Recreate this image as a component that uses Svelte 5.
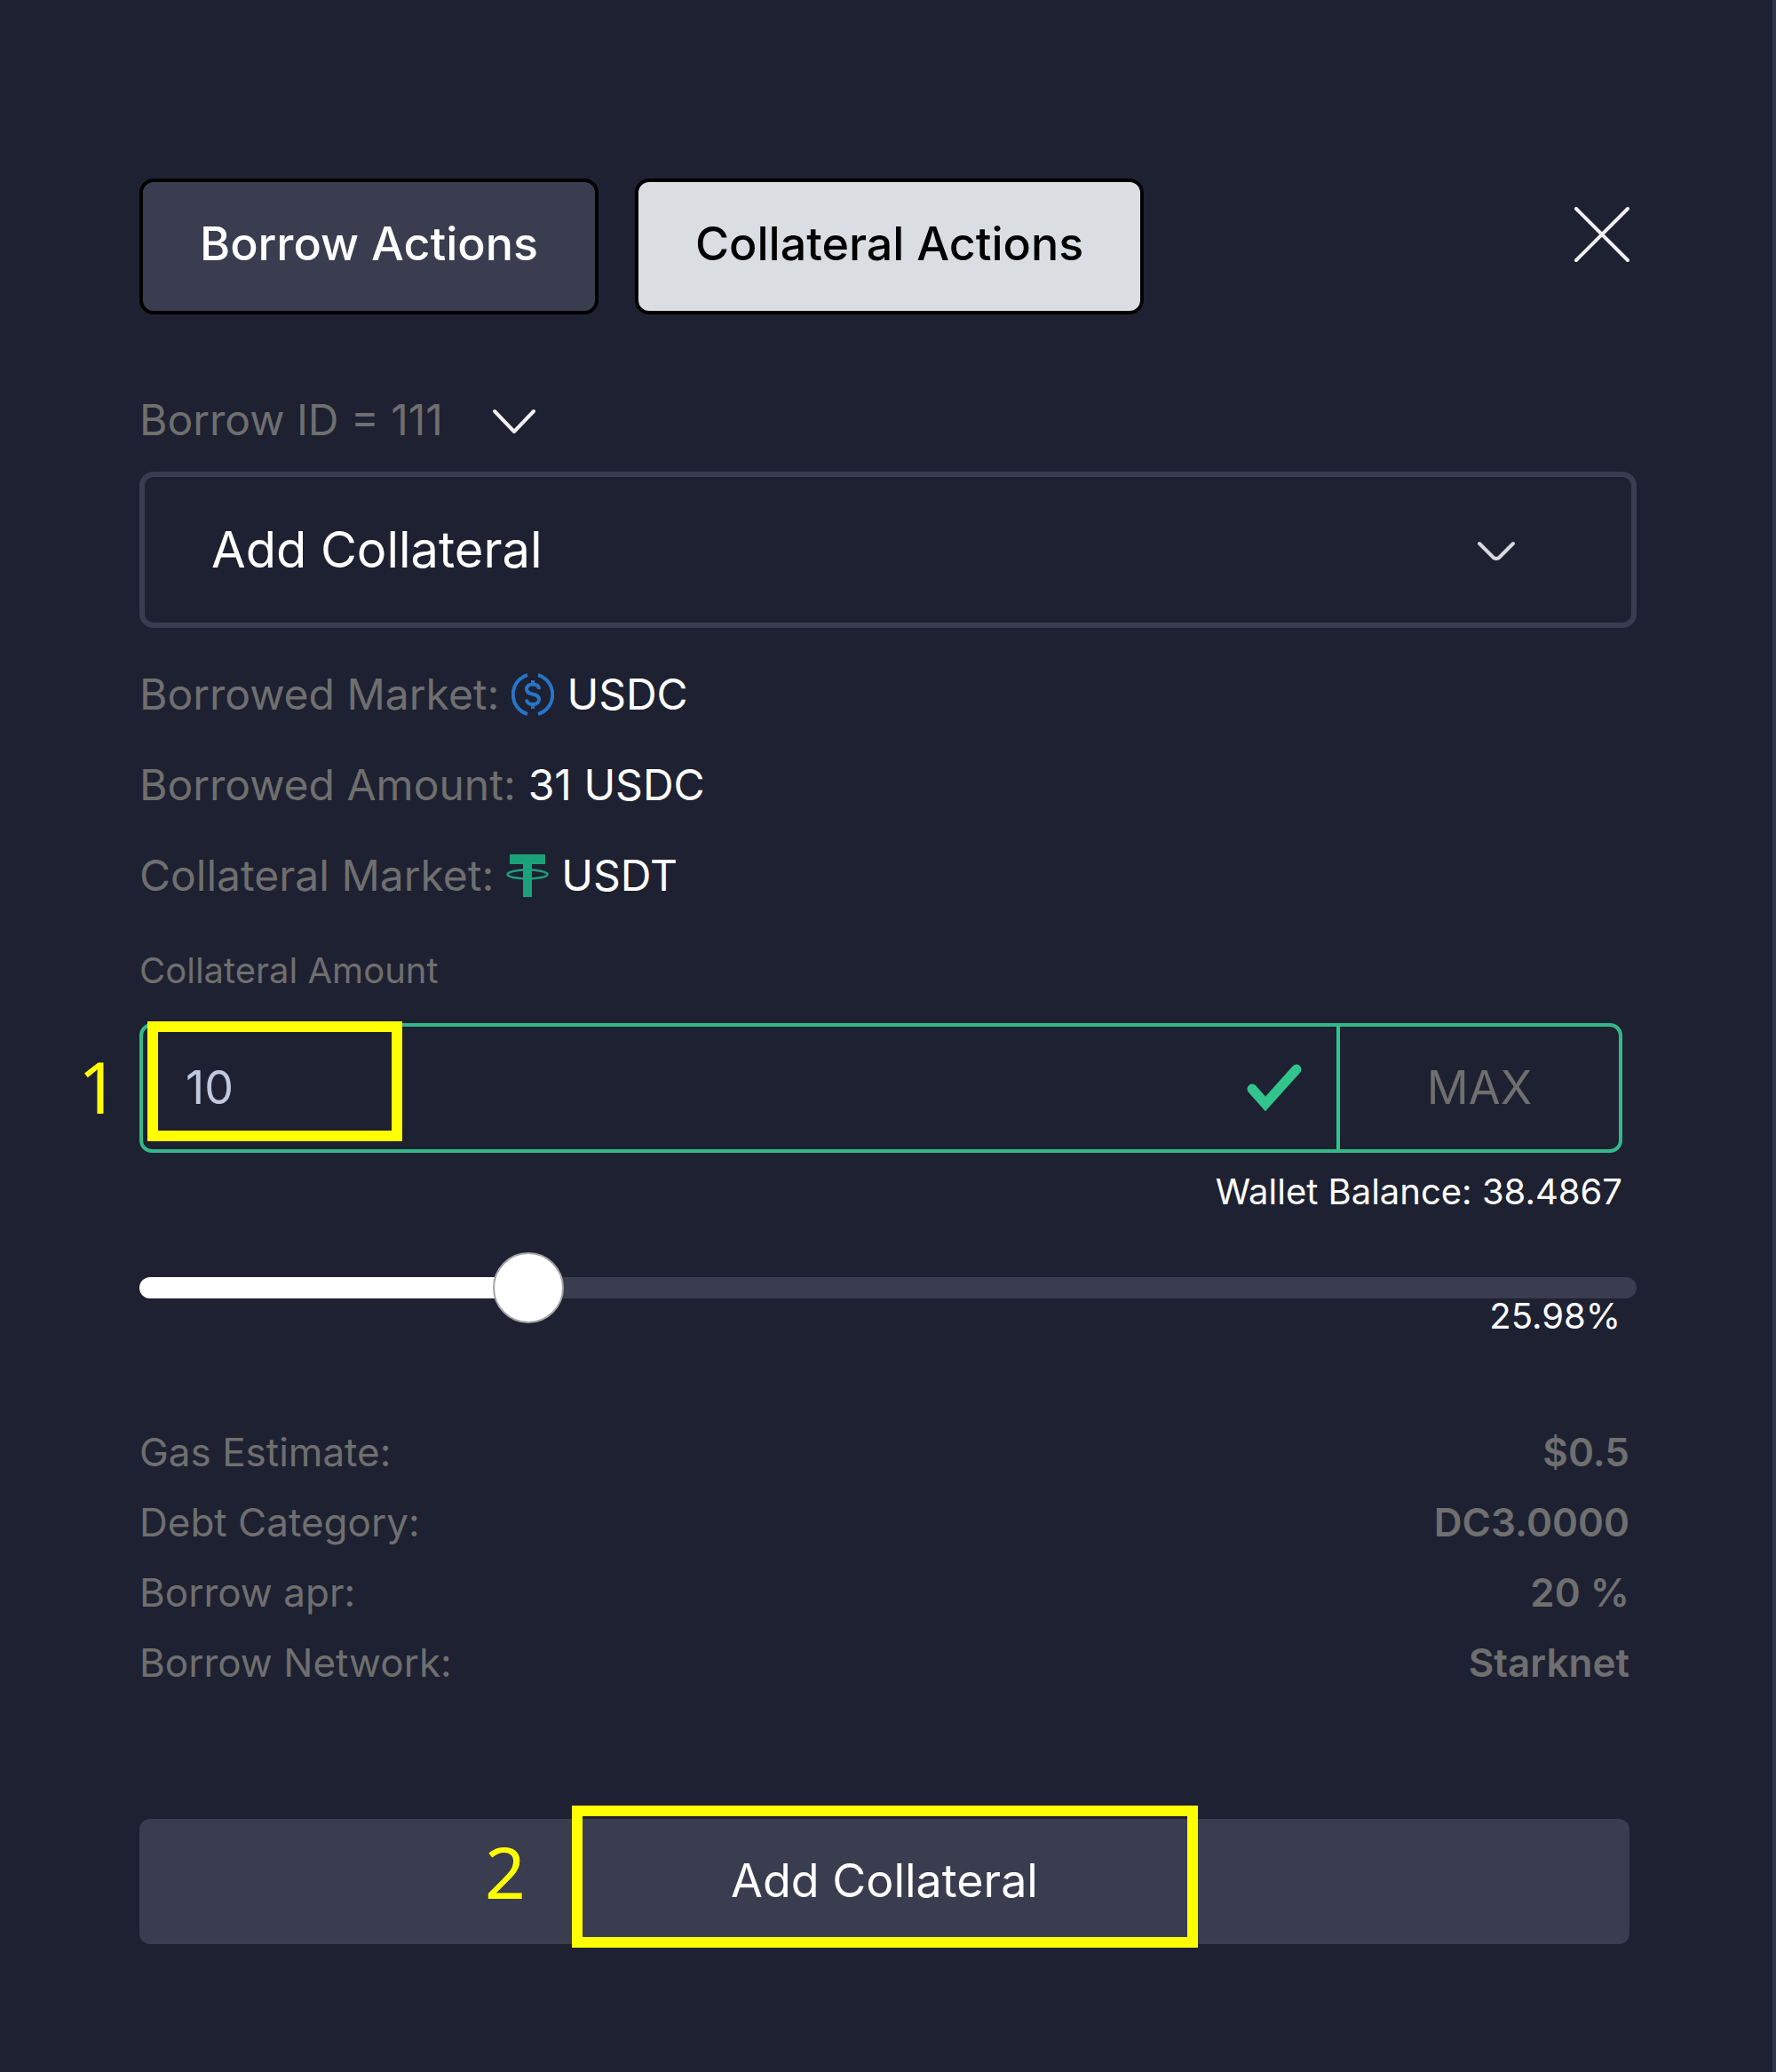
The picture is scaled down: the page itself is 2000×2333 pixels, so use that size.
<script>
  let action = $state('Add Collateral');
  let loan = $state('111');
  let amount = $state('10');
  let percent = $state(25.98);
  let tab = $state('collateral');

  const details = [
    ['Gas Estimate:', '$0.5'],
    ['Debt Category:', 'DC3.0000'],
    ['Borrow apr:', '20 %'],
    ['Borrow Network:', 'Starknet'],
  ];
</script>

<main class="panel">
  <header class="top">
    <nav class="tabs" aria-label="Actions">
      <button class="tab" class:active={tab === 'borrow'} onclick={() => (tab = 'borrow')}>Borrow Actions</button>
      <button class="tab" class:active={tab === 'collateral'} onclick={() => (tab = 'collateral')}>Collateral Actions</button>
    </nav>
    <button class="close" aria-label="Close">
      <svg width="62" height="62" viewBox="0 0 62 62" fill="none" stroke="#f0f0f2" stroke-width="4" stroke-linecap="round">
        <path d="M2 2 60 60M60 2 2 60" />
      </svg>
    </button>
  </header>

  <div class="loan">
    <select aria-label="Borrow ID" bind:value={loan}>
      <option value="111">Borrow ID = 111</option>
    </select>
    <svg width="50" height="34" viewBox="0 0 50 34" fill="none" stroke="#f0f0f2" stroke-width="4" stroke-linecap="round" stroke-linejoin="round">
      <path d="M3 7 25 30 47 7" />
    </svg>
  </div>

  <div class="action">
    <select aria-label="Action" bind:value={action}>
      <option>Add Collateral</option>
    </select>
    <svg width="44" height="28" viewBox="0 0 44 28" fill="none" stroke="#d8d9dd" stroke-width="4" stroke-linecap="round" stroke-linejoin="round">
      <path d="M3 7 19 23Q22 25 25 23L41 7" />
    </svg>
  </div>

  <div class="facts">
    <p>
      <span>Borrowed Market:</span>
      <svg width="48" height="48" viewBox="0 0 48 48" fill="none" stroke="#2775ca" stroke-width="4">
        <path d="M18 2A23 23 0 0 0 18 46M30 2A23 23 0 0 1 30 46" />
        <path d="M31 18C31 14 28 12.500 24 12.500S17 14.500 17 18C17 26 31 21 31 29.500C31 33 28 35 24 35S17 33 17 29.500M24 8V13M24 35V40" />
      </svg>
      <strong>USDC</strong>
    </p>
    <p><span>Borrowed Amount:</span><strong>31 USDC</strong></p>
    <p>
      <span>Collateral Market:</span>
      <svg width="48" height="48" viewBox="0 0 48 48">
        <path fill="#1ba27a" d="M4 0H44V11H29V48H19V11H4Z" />
        <ellipse cx="24" cy="22.500" rx="22.500" ry="5" fill="none" stroke="#1ba27a" stroke-width="2.500" />
      </svg>
      <strong>USDT</strong>
    </p>
  </div>

  <label class="caption" for="amount">Collateral Amount</label>
  <div class="narrow">
    <div class="field">
      <input id="amount" type="text" inputmode="decimal" bind:value={amount} />
      <svg class="check" width="62" height="54" viewBox="0 0 62 54" fill="none" stroke="#31c48d" stroke-width="11" stroke-linecap="round">
        <path d="M6 28 21 45 56 6" />
      </svg>
      <button class="max">MAX</button>
      <span class="step step-one">1</span>
      <span class="mark mark-one"></span>
    </div>
    <p class="balance">Wallet Balance: 38.4867</p>
  </div>

  <div class="slider">
    <div class="fill" style="width: {percent}%"></div>
    <input type="range" min="0" max="100" step="0.01" aria-label="Share of wallet balance" bind:value={percent} />
  </div>
  <p class="percent">{percent}%</p>

  <dl class="details">
    {#each details as [name, value]}
      <div><dt>{name}</dt><dd>{value}</dd></div>
    {/each}
  </dl>

  <div class="submit-row">
    <button class="submit">Add Collateral</button>
    <span class="step step-two">2</span>
    <span class="mark mark-two"></span>
  </div>
</main>

<style>
  :global(body) {
    background: #1e2131;
  }
  .panel {
    box-sizing: border-box;
    min-height: 100vh;
    padding: 201px 153px 144px 157px;
    border-right: 4px solid #2f364b;
    background: #1e2131;
    color: #fff;
    font-family: Inter, 'Liberation Sans', sans-serif;
    font-size: 48px;
    line-height: 60px;
  }
  button,
  select,
  input {
    margin: 0;
    padding: 0;
    border: 0;
    background: none;
    color: inherit;
    font: inherit;
    appearance: none;
    outline: none;
  }
  button,
  select {
    cursor: pointer;
  }
  p,
  dl,
  dd {
    margin: 0;
  }
  svg {
    flex: none;
    display: block;
  }

  .top {
    display: flex;
    justify-content: space-between;
    align-items: flex-start;
  }
  .tabs {
    display: flex;
    gap: 41px;
  }
  .tab {
    padding: 40px 64px 45px;
    border: 4px solid #000;
    border-radius: 16px;
    background: #3a3c4f;
    font-size: 52px;
    font-weight: 500;
  }
  .tab.active {
    background: #dadde2;
    color: #000;
  }
  .close {
    margin: 32px 8px 0 0;
  }

  .loan {
    display: inline-grid;
    align-items: center;
    margin-top: 89px;
    color: #6f6f6f;
  }
  .loan select,
  .loan svg,
  .action select,
  .action svg {
    grid-area: 1 / 1;
  }
  .loan select {
    padding-right: 105px;
  }
  .loan svg,
  .action svg {
    justify-self: end;
    pointer-events: none;
  }
  .action {
    display: grid;
    align-items: center;
    margin-top: 28px;
  }
  .action select {
    padding: 52px 75px;
    border: 6px solid #3a3c4f;
    border-radius: 16px;
    font-size: 56px;
  }
  .action svg {
    margin-right: 136px;
  }

  .facts {
    display: grid;
    gap: 42px;
    margin-top: 45px;
  }
  .facts p {
    display: flex;
    align-items: center;
    gap: 14px;
  }
  .facts span {
    color: #6f6f6f;
  }
  .facts strong {
    font-weight: 400;
  }

  .caption {
    display: block;
    margin: 51px 0 33px;
    color: #6f6f6f;
    font-size: 40px;
    line-height: 52px;
  }
  .narrow {
    margin-right: 16px;
  }
  .field {
    position: relative;
    display: flex;
    align-items: center;
    height: 138px;
    border: 4px solid #34b88a;
    border-radius: 14px;
    font-size: 52px;
  }
  .field input {
    flex: 1;
    min-width: 0;
    padding-left: 48px;
    color: #bfc8de;
  }
  .check {
    margin: 0 39px;
  }
  .max {
    align-self: stretch;
    width: 318px;
    border-left: 4px solid #31c48d;
    color: #6f6f6f;
  }
  .balance {
    margin-top: 18px;
    font-size: 40px;
    line-height: 52px;
    text-align: right;
  }

  .slider {
    position: relative;
    height: 24px;
    margin-top: 70px;
    border-radius: 12px;
    background: #3a3c4f;
  }
  .fill {
    height: 100%;
    border-radius: 12px;
    background: #fff;
  }
  .slider input {
    position: absolute;
    top: -28px;
    left: -40px;
    width: calc(100% + 80px);
    height: 80px;
  }
  .slider input::-webkit-slider-thumb {
    appearance: none;
    box-sizing: border-box;
    width: 80px;
    height: 80px;
    border: 2px solid #a3a3a8;
    border-radius: 50%;
    background: #fff;
  }
  .percent {
    margin-right: 18px;
    font-size: 40px;
    line-height: 40px;
    text-align: right;
  }

  .details {
    display: grid;
    gap: 27px;
    margin: 107px 8px 0 0;
    color: #6f6f6f;
    font-size: 44px;
    line-height: 52px;
  }
  .details div {
    display: flex;
    justify-content: space-between;
  }
  .details dd {
    font-weight: 600;
  }

  .submit-row {
    position: relative;
    margin: 150px 8px 0 0;
  }
  .submit {
    display: block;
    width: 100%;
    padding: 40px 0 41px;
    border-radius: 12px;
    background: #3a3c4f;
    font-size: 52px;
  }

  .step {
    position: absolute;
    color: #ff0;
    font-family: 'Noto Sans', 'Open Sans', sans-serif;
    font-size: 80px;
    line-height: 80px;
  }
  .step-one {
    top: 27px;
    left: -73px;
  }
  .step-two {
    top: 19px;
    left: 389px;
  }
  .mark {
    position: absolute;
    box-sizing: border-box;
    border: 12px solid #ff0;
    pointer-events: none;
  }
  .mark-one {
    top: -6px;
    left: 5px;
    width: 287px;
    height: 135px;
  }
  .mark-two {
    top: -15px;
    left: calc(50% - 352px);
    width: 705px;
    height: 160px;
  }
</style>
